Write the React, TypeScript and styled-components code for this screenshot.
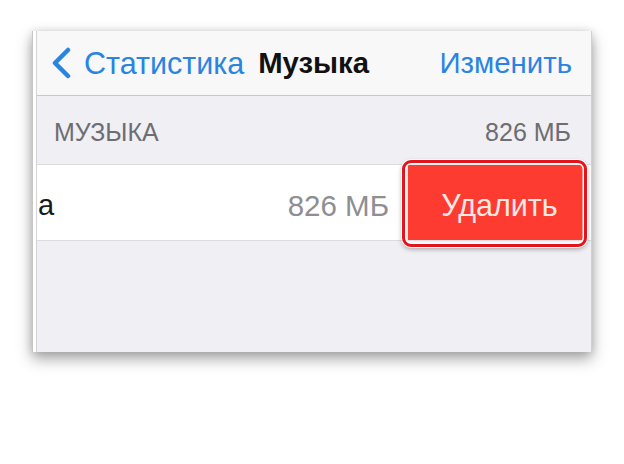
import styled, { createGlobalStyle } from "styled-components";

const GlobalStyle = createGlobalStyle`
  html, body {
    margin: 0;
    padding: 0;
    background: #ffffff;
  }
  body {
    font-family: "Liberation Sans", Arial, sans-serif;
  }
`;

const Page = styled.div`
  width: 624px;
  height: 464px;
  padding: 31px 0 0 32px;
  box-sizing: border-box;
`;

const Card = styled.div`
  width: 560px;
  height: 321px;
  display: flex;
  background: #ffffff;
  border-left: 1px solid #c6c6c6;
  border-right: 1px solid #d0d0d0;
  box-sizing: border-box;
  padding-left: 3px;
  box-shadow: 0 7px 14px rgba(0, 0, 0, 0.35), 0 0 8px rgba(0, 0, 0, 0.12);
  overflow: hidden;
`;

const Screen = styled.div`
  flex: 1;
  display: flex;
  flex-direction: column;
  border-left: 1px solid #d4d4d8;
  background: #efeff4;
  overflow: hidden;
`;

const NavBar = styled.div`
  height: 64px;
  flex-shrink: 0;
  display: flex;
  align-items: center;
  padding: 0 19px 0 14px;
  background: #f8f8f8;
  border-bottom: 1px solid #c8c7cc;
`;

const BackButton = styled.div`
  display: flex;
  align-items: center;
  gap: 13px;
  color: #2a84e2;
  font-size: 30.5px;
`;

const Title = styled.div`
  margin-left: 14px;
  font-size: 29.3px;
  font-weight: bold;
  color: #111111;
`;

const NavAction = styled.div`
  margin-left: auto;
  font-size: 29.4px;
  color: #2a84e2;
`;

const SectionHeader = styled.div`
  height: 69px;
  flex-shrink: 0;
  display: flex;
  align-items: flex-end;
  justify-content: space-between;
  padding: 0 20px 17px 17px;
  box-sizing: border-box;
  border-bottom: 1px solid #dcdce0;
  color: #6d6d72;
  font-size: 25px;
`;

const Row = styled.div`
  height: 75px;
  flex-shrink: 0;
  display: flex;
  align-items: stretch;
  background: #ffffff;
  border-bottom: 1px solid #dcdce0;
  padding-right: 8px;
`;

const RowLabel = styled.div`
  display: flex;
  align-items: center;
  padding-top: 6px;
  font-size: 29px;
  color: #1a1a1a;
  margin-left: 1px;
`;

const RowValue = styled.div`
  margin-left: auto;
  margin-right: 16px;
  display: flex;
  align-items: center;
  padding-top: 6px;
  font-size: 29.5px;
  color: #8e8e93;
`;

const DeleteButton = styled.div`
  position: relative;
  width: 178px;
  display: flex;
  align-items: center;
  justify-content: center;
  background: #fe3b30;
  color: #fbe9e6;
  font-size: 30.5px;
  border-left: 3px solid #e4e4e4;
  box-sizing: border-box;
  padding: 6px 0 0 8px;

  &::after {
    content: "";
    position: absolute;
    top: -5px;
    bottom: -7px;
    left: -6px;
    right: -4px;
    border: 3px solid #e3141c;
    border-radius: 9px;
    box-shadow: inset 0 0 0 1.5px #ffffff, 0 0 0 1px #ffffff,
      0 2px 5px rgba(0, 0, 0, 0.35);
  }
`;

function Chevron() {
  return (
    <svg width="20" height="32" viewBox="0 0 20 32">
      <path
        d="M17 3 L4 16 L17 29"
        fill="none"
        stroke="#2a84e2"
        strokeWidth="4.5"
        strokeLinecap="round"
        strokeLinejoin="round"
      />
    </svg>
  );
}

function App() {
  return (
    <Page>
      <GlobalStyle />
      <Card>
        <Screen>
          <NavBar>
            <BackButton>
              <Chevron />
              Статистика
            </BackButton>
            <Title>Музыка</Title>
            <NavAction>Изменить</NavAction>
          </NavBar>
          <SectionHeader>
            <span>МУЗЫКА</span>
            <span>826 МБ</span>
          </SectionHeader>
          <Row>
            <RowLabel>a</RowLabel>
            <RowValue>826 МБ</RowValue>
            <DeleteButton>Удалить</DeleteButton>
          </Row>
        </Screen>
      </Card>
    </Page>
  );
}

export default App;
